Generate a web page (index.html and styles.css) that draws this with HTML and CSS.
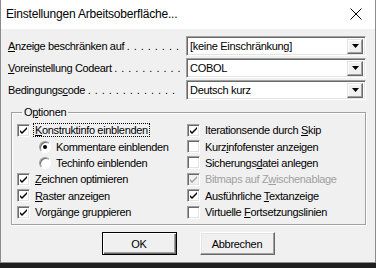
FILE: index.html
```html
<!DOCTYPE html>
<html lang="de">
<head>
    <meta charset="UTF-8">
    <title>Einstellungen Arbeitsoberfläche...</title>
    <link rel="stylesheet" href="styles.css">
</head>
<body>
    <div class="dialog">
        <div class="titlebar">
            <span class="title">Einstellungen Arbeitsoberfläche...</span>
            <svg class="close" width="12" height="12" viewBox="0 0 12 12">
                <path d="M0.5 0.5 L11.5 11.5 M11.5 0.5 L0.5 11.5" stroke="#000" stroke-width="1" fill="none"/>
            </svg>
        </div>
        <div class="content">
            <div class="field-row">
                <label class="field-label"><u>A</u>nzeige beschränken auf <span class="dots">. . . . . . . .</span></label>
                <div class="combo">
                    <span class="combo-value">[keine Einschränkung]</span>
                    <span class="combo-btn"><svg width="7" height="4" viewBox="0 0 7 4"><path d="M0 0 H7 L3.5 4 Z" fill="#000"/></svg></span>
                </div>
            </div>
            <div class="field-row">
                <label class="field-label"><u>V</u>oreinstellung Codeart <span class="dots">. . . . . . . . . .</span></label>
                <div class="combo">
                    <span class="combo-value">COBOL</span>
                    <span class="combo-btn"><svg width="7" height="4" viewBox="0 0 7 4"><path d="M0 0 H7 L3.5 4 Z" fill="#000"/></svg></span>
                </div>
            </div>
            <div class="field-row">
                <label class="field-label">Bedingungs<u>c</u>ode <span class="dots">. . . . . . . . . . . . .</span></label>
                <div class="combo">
                    <span class="combo-value">Deutsch kurz</span>
                    <span class="combo-btn"><svg width="7" height="4" viewBox="0 0 7 4"><path d="M0 0 H7 L3.5 4 Z" fill="#000"/></svg></span>
                </div>
            </div>

            <fieldset class="group">
                <legend>O<u>p</u>tionen</legend>
                <div class="options">
                    <div class="col">
                        <div class="opt"><span class="box checked"></span><span class="focus"><u>K</u>onstruktinfo einblenden</span></div>
                        <div class="opt sub"><span class="radio on"></span><span>Kommentare einblenden</span></div>
                        <div class="opt sub"><span class="radio"></span><span>Techinfo einblenden</span></div>
                        <div class="opt"><span class="box checked"></span><span><u>Z</u>eichnen optimieren</span></div>
                        <div class="opt"><span class="box checked"></span><span><u>R</u>aster anzeigen</span></div>
                        <div class="opt"><span class="box checked"></span><span>Vorgänge <u>g</u>ruppieren</span></div>
                    </div>
                    <div class="col">
                        <div class="opt"><span class="box checked"></span><span>Iterationsende durch <u>S</u>kip</span></div>
                        <div class="opt"><span class="box"></span><span>Kurz<u>i</u>nfofenster anzeigen</span></div>
                        <div class="opt"><span class="box"></span><span>Sicherungs<u>d</u>atei anlegen</span></div>
                        <div class="opt disabled"><span class="box checked"></span><span>Bitmaps auf Z<u>w</u>ischenablage</span></div>
                        <div class="opt"><span class="box checked"></span><span>Ausführliche <u>T</u>extanzeige</span></div>
                        <div class="opt"><span class="box"></span><span>Virtuelle <u>F</u>ortsetzungslinien</span></div>
                    </div>
                </div>
            </fieldset>

            <div class="buttons">
                <button class="btn default">OK</button>
                <button class="btn">Abbrechen</button>
            </div>
        </div>
    </div>
</body>
</html>
```

FILE: styles.css
```css
body {
    margin: 0;
    background-color: #1f1f1f;
    font-family: "Liberation Sans", Arial, sans-serif;
    font-size: 11px;
    color: #000;
}
.dialog {
    width: 374px;
    height: 262px;
    background-color: #f0f0f0;
    border: 1px solid #8c8c8c;
    border-top: none;
}
.titlebar {
    height: 29px;
    background-color: #fff;
    display: flex;
    align-items: center;
    justify-content: space-between;
    padding: 0 13px 0 5px;
}
.title {
    font-size: 12px;
    letter-spacing: -0.2px;
    margin-top: -2px;
}
.close {
    margin-top: -2px;
}
.content {
    padding: 7px 9px 0 7px;
}
.field-row {
    display: flex;
    align-items: center;
    height: 20px;
    margin-bottom: 2px;
}
.field-label {
    width: 178px;
    white-space: nowrap;
    letter-spacing: -0.35px;
}
.dots {
    letter-spacing: 0.45px;
}
.combo {
    flex: 1;
    height: 20px;
    box-sizing: border-box;
    background-color: #fff;
    border: 1px solid;
    border-color: #a0a0a0 #fff #fff #a0a0a0;
    box-shadow: inset 1px 1px 0 #696969, inset -1px -1px 0 #e3e3e3;
    display: flex;
    align-items: center;
    padding: 2px 2px 2px 3px;
}
.combo-value {
    flex: 1;
    letter-spacing: -0.3px;
}
.combo-btn {
    width: 16px;
    height: 15px;
    box-sizing: border-box;
    background-color: #f0f0f0;
    border: 1px solid;
    border-color: #e3e3e3 #696969 #696969 #e3e3e3;
    box-shadow: inset -1px -1px 0 #a0a0a0, inset 1px 1px 0 #fff;
    display: flex;
    align-items: center;
    justify-content: center;
}
.group {
    margin: 6px 0 0 3px;
    padding: 4px 5px 0 5px;
    border: 1px solid #a0a0a0;
    box-shadow: inset 1px 1px 0 #fff, 1px 1px 0 #fff;
    height: 119px;
    box-sizing: border-box;
}
.group legend {
    padding: 0 2px;
    margin-left: 5px;
    letter-spacing: -0.3px;
}
.options {
    display: grid;
    grid-template-columns: 170px 1fr;
}
.col {
    display: grid;
    grid-auto-rows: 16.4px;
}
.opt {
    display: flex;
    align-items: center;
    gap: 5px;
    white-space: nowrap;
    letter-spacing: -0.35px;
}
.opt.sub {
    padding-left: 22px;
}
.box {
    width: 13px;
    height: 13px;
    box-sizing: border-box;
    background-color: #fff;
    border: 1px solid;
    border-color: #a0a0a0 #fff #fff #a0a0a0;
    box-shadow: inset 1px 1px 0 #696969, inset -1px -1px 0 #e3e3e3;
    flex-shrink: 0;
}
.box.checked {
    background-image: url("data:image/svg+xml;utf8,<svg xmlns='http://www.w3.org/2000/svg' width='11' height='11' viewBox='0 0 11 11'><path d='M2 5 L4 7 L9 2 V4 L4 9 L2 7 Z' fill='%23000'/></svg>");
    background-position: center;
    background-repeat: no-repeat;
}
.disabled {
    color: #a0a0a0;
}
.disabled .box.checked {
    background-color: #f0f0f0;
    background-image: url("data:image/svg+xml;utf8,<svg xmlns='http://www.w3.org/2000/svg' width='11' height='11' viewBox='0 0 11 11'><path d='M2 5 L4 7 L9 2 V4 L4 9 L2 7 Z' fill='%23a0a0a0'/></svg>");
}
.radio {
    width: 12px;
    height: 12px;
    box-sizing: border-box;
    border-radius: 50%;
    background-color: #fff;
    border: 1px solid;
    border-color: #a0a0a0 #fff #fff #a0a0a0;
    box-shadow: inset 1px 1px 0 #696969;
    position: relative;
    flex-shrink: 0;
}
.radio.on::after {
    content: "";
    position: absolute;
    left: 3px;
    top: 3px;
    width: 4px;
    height: 4px;
    border-radius: 50%;
    background-color: #000;
}
.focus {
    outline: 1px dotted #000;
    outline-offset: 0;
    padding: 0 1px;
    margin-left: -1px;
}
.buttons {
    display: flex;
    justify-content: center;
    gap: 23px;
    margin-top: 7px;
    padding-left: 2px;
}
.btn {
    width: 75px;
    height: 23px;
    font-family: "Liberation Sans", Arial, sans-serif;
    font-size: 11px;
    letter-spacing: -0.3px;
    background-color: #f0f0f0;
    border: 1px solid;
    border-color: #fff #696969 #696969 #fff;
    box-shadow: inset -1px -1px 0 #a0a0a0, inset 1px 1px 0 #e3e3e3;
    padding: 0;
}
.btn.default {
    border: 1px solid #000;
    box-shadow: inset 1px 1px 0 #fff, inset -1px -1px 0 #696969, inset -2px -2px 0 #a0a0a0;
}
```
